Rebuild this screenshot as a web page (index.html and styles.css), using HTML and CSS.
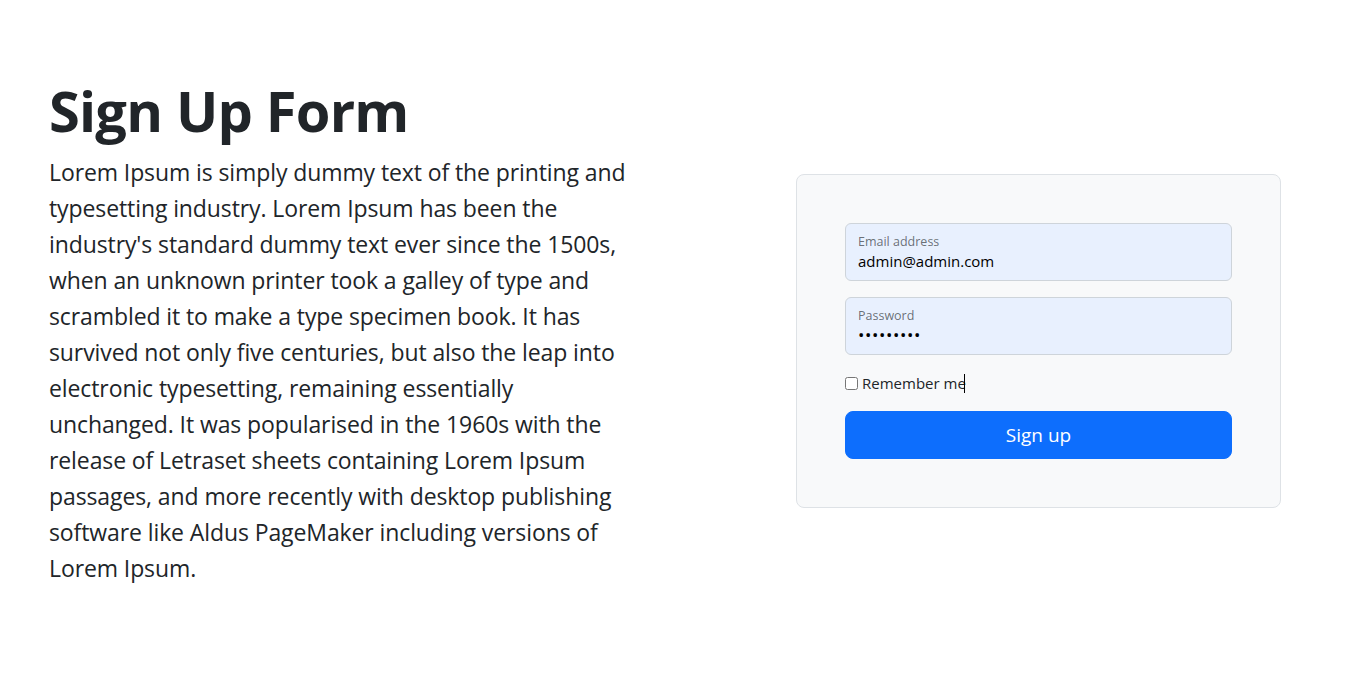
FILE: index.html
```html
<!DOCTYPE html>
<html lang="en">
<head>
<meta charset="utf-8">
<title>Sign Up Form</title>
<link rel="stylesheet" href="styles.css">
</head>
<body>
<main class="page">
  <section class="intro">
    <h1 class="title">Sign Up Form</h1>
    <p class="lead">Lorem Ipsum is simply dummy text of the printing and typesetting industry. Lorem Ipsum has been the industry's standard dummy text ever since the 1500s, when an unknown printer took a galley of type and scrambled it to make a type specimen book. It has survived not only five centuries, but also the leap into electronic typesetting, remaining essentially unchanged. It was popularised in the 1960s with the release of Letraset sheets containing Lorem Ipsum passages, and more recently with desktop publishing software like Aldus PageMaker including versions of Lorem Ipsum.</p>
  </section>
  <section class="form-col">
    <form class="card">
      <div class="field">
        <label class="field-label" for="email">Email address</label>
        <input class="field-input" id="email" type="email" value="admin@admin.com">
      </div>
      <div class="field">
        <label class="field-label" for="pw">Password</label>
        <input class="field-input field-secret" id="pw" type="password" value="admin1234">
      </div>
      <div class="check">
        <label class="check-label"><input class="check-box" type="checkbox"> Remember me</label><span class="caret"></span>
      </div>
      <button class="btn" type="button">Sign up</button>
    </form>
  </section>
</main>
</body>
</html>
```

FILE: styles.css
```css
* { box-sizing: border-box; }
html, body { margin: 0; padding: 0; background: #fff; }
body {
  font-family: "Open Sans", "Noto Sans", sans-serif;
  color: #212529;
  font-size: 16px;
  line-height: 1.5;
}
.page {
  display: flex;
  align-items: center;
  gap: 48px;
  padding: 82px 0 0 49px;
  width: 1282px;
}
.intro {
  width: 699px;
  flex: 0 0 699px;
}
.title {
  margin: 0 0 16px;
  font-size: 56px;
  line-height: 1;
  font-weight: 700;
  letter-spacing: -0.8px;
}
.lead {
  margin: 0 0 14px;
  width: 583px;
  font-size: 23px;
  line-height: 36px;
  letter-spacing: -0.1px;
}
.form-col {
  flex: 0 0 485px;
}
.card {
  background: #f8f9fa;
  border: 1px solid #dee2e6;
  border-radius: 8px;
  padding: 48px;
  display: flex;
  flex-direction: column;
}
.field {
  position: relative;
  margin-bottom: 16px;
}
.field-label {
  position: absolute;
  left: 13px;
  top: 10px;
  font-size: 12.5px;
  line-height: 1.5;
  color: rgba(33, 37, 41, 0.65);
}
.field-input {
  display: block;
  width: 100%;
  height: 58px;
  padding: 26px 12px 8px;
  border: 1px solid #ced4da;
  border-radius: 6px;
  background: #e8f0fe;
  font-family: inherit;
  font-size: 15px;
  line-height: 1.5;
  color: #000;
  outline: none;
}
.field-secret {
  font-size: 17px;
  letter-spacing: 0.6px;
  padding-top: 24px;
}
.check {
  display: flex;
  align-items: center;
  margin-bottom: 16px;
  height: 24px;
}
.check-label {
  display: flex;
  align-items: center;
  font-size: 15px;
  color: #212529;
}
.check-box {
  width: 13px;
  height: 13px;
  margin: 0 4px 0 0;
}
.caret {
  display: inline-block;
  width: 1px;
  height: 19px;
  background: #000;
  margin-left: -2px;
}
.btn {
  width: 100%;
  height: 48px;
  border: 1px solid #0d6efd;
  border-radius: 8px;
  background: #0d6efd;
  color: #fff;
  font-family: inherit;
  font-size: 19px;
  line-height: 1.5;
  cursor: pointer;
}
```
